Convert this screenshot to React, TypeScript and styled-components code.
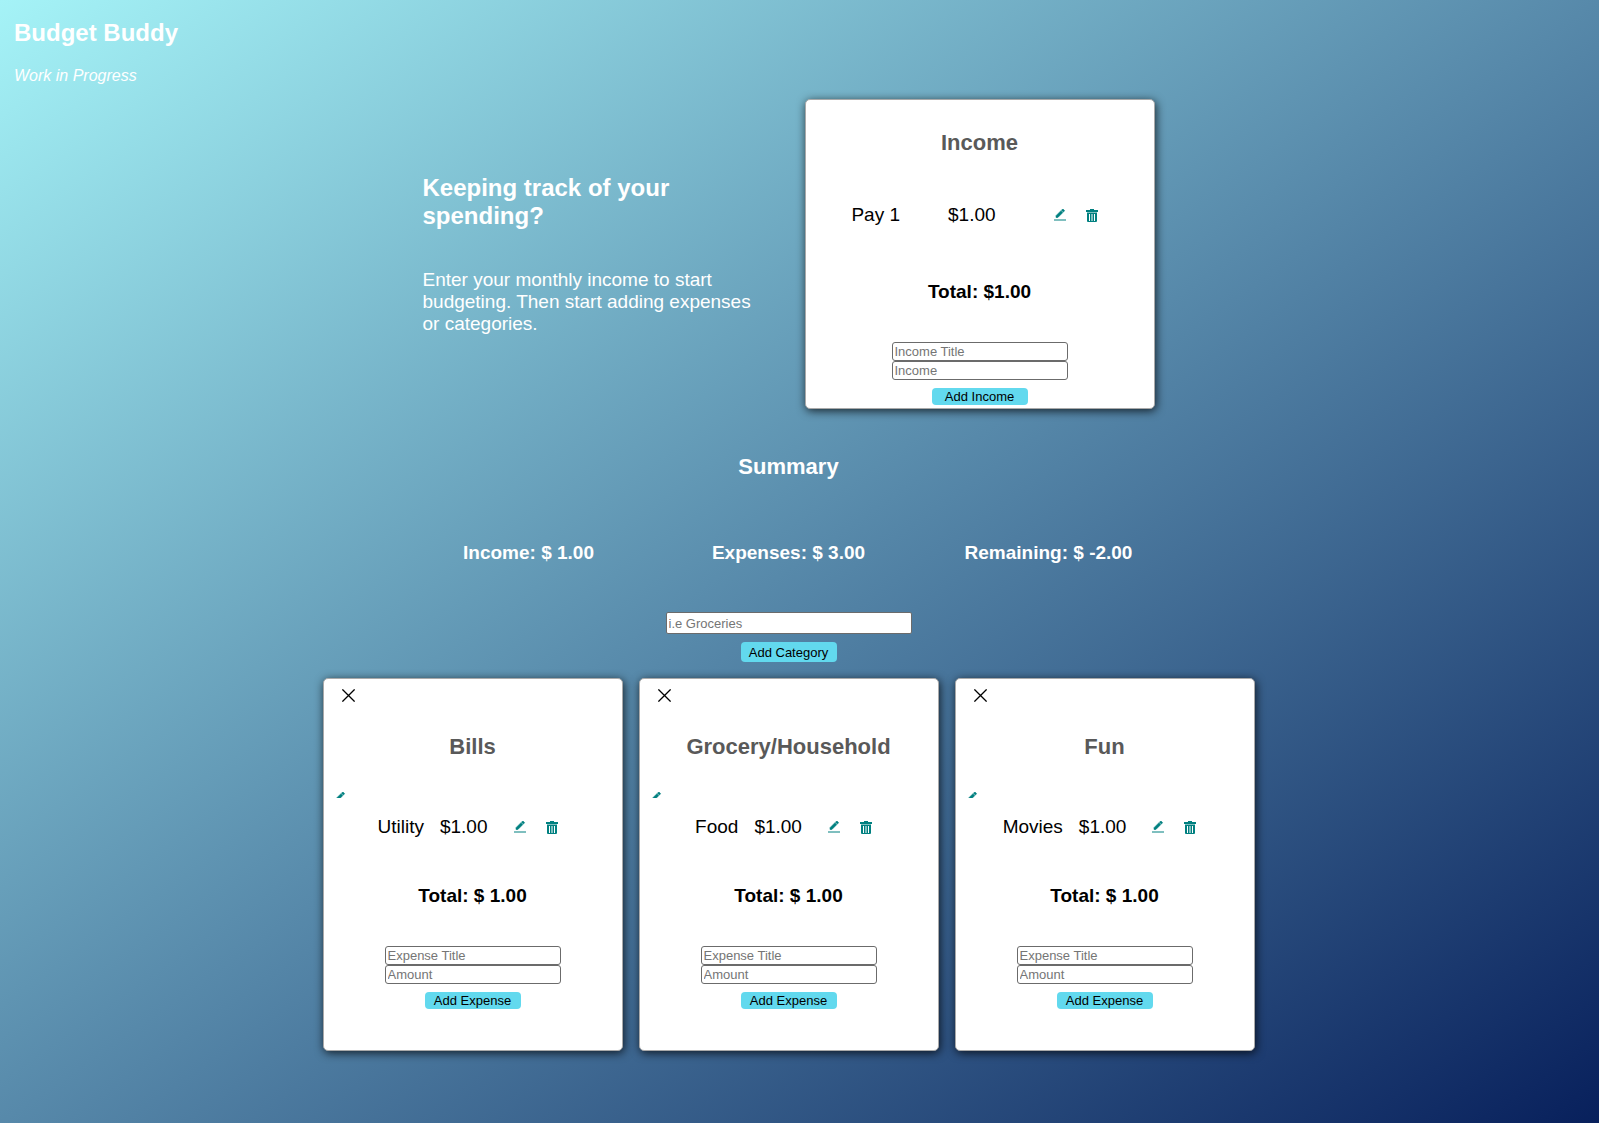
import React from "react";
import styled, { createGlobalStyle } from "styled-components";

const GlobalStyle = createGlobalStyle`
  * { box-sizing: border-box; }
  body {
    margin: 0;
    font-family: "Liberation Sans", Arial, sans-serif;
    font-size: 16px;
    color: #000;
  }
  h1, h2, h3, p, ul { margin: 0; padding: 0; }
`;

const Page = styled.div`
  min-height: 100vh;
  padding: 19px 22px 72px 0;
  background: linear-gradient(to bottom right, #a5f3f7 0%, #5789aa 50%, #08205c 100%);
`;

const Header = styled.header`
  padding-left: 14px;
  color: #fff;
`;

const Brand = styled.h1`
  font-size: 24px;
  line-height: 28px;
`;

const Status = styled.p`
  margin-top: 20px;
  font-style: italic;
  line-height: 18px;
`;

const Main = styled.main`
  display: flex;
  flex-direction: column;
  align-items: center;
  margin-top: 14px;
`;

const Hero = styled.section`
  display: flex;
  justify-content: center;
  align-items: center;
  gap: 48px;
`;

const Intro = styled.div`
  width: 334px;
  color: #fff;
`;

const IntroTitle = styled.h2`
  font-size: 24px;
  line-height: 28px;
`;

const IntroText = styled.p`
  margin-top: 39px;
  font-size: 19px;
  line-height: 22px;
`;

const Card = styled.article<{ $wide?: boolean }>`
  display: flex;
  flex-direction: column;
  align-items: center;
  width: ${(p) => (p.$wide ? "350px" : "300px")};
  padding: ${(p) => (p.$wide ? "30px 0 3px" : "10px 0 41px")};
  background: #fff;
  border: 1px solid #a9a9a9;
  border-radius: 5px;
  box-shadow: 1px 2px 10px rgba(0, 0, 0, 0.75);
`;

const CardTitle = styled.h2`
  color: #595959;
  font-size: 22px;
  line-height: 25px;
`;

const Entries = styled.ul<{ $top: number }>`
  margin-top: ${(p) => p.$top}px;
  list-style: none;
`;

const Entry = styled.li<{ $gap: number }>`
  display: flex;
  align-items: center;
  gap: ${(p) => p.$gap}px;
  height: 32px;
  font-size: 19px;
  line-height: 24px;
`;

const Actions = styled.div`
  display: flex;
`;

const IconButton = styled.button`
  display: flex;
  align-items: center;
  justify-content: center;
  width: 32px;
  height: 32px;
  padding: 0;
  border: 0;
  background: none;
  color: #008080;
  cursor: pointer;
`;

const CloseButton = styled(IconButton)`
  align-self: flex-start;
  width: 13px;
  height: 13px;
  margin: 0 0 32px 18px;
  color: #000;
`;

const RenameButton = styled(IconButton)`
  align-self: flex-start;
  align-items: flex-start;
  width: 12px;
  height: 6px;
  margin: 33px 0 0 10px;
  overflow: hidden;

  svg { flex: none; }
`;

const Total = styled.h3<{ $top: number }>`
  margin-top: ${(p) => p.$top}px;
  font-size: 19px;
  line-height: 22px;
`;

const Form = styled.form<{ $top: number }>`
  display: flex;
  flex-direction: column;
  align-items: center;
  margin-top: ${(p) => p.$top}px;
`;

const Field = styled.input<{ $large?: boolean }>`
  width: ${(p) => (p.$large ? "246px" : "176px")};
  height: ${(p) => (p.$large ? "22px" : "19px")};
  padding: 1px 2px;
  border: 1px solid #6b6b6b;
  border-radius: ${(p) => (p.$large ? "2px" : "3px")};
  background: #fff;
  font-family: inherit;
  font-size: 13px;

  &::placeholder { color: #757575; }
`;

const SubmitButton = styled.button<{ $large?: boolean }>`
  width: 96px;
  height: ${(p) => (p.$large ? "20px" : "17px")};
  margin-top: 8px;
  padding: 0;
  border: 0;
  border-radius: 4px;
  background: #62d9ee;
  color: #000;
  font-family: inherit;
  font-size: 13px;
  line-height: 17px;
  cursor: pointer;
`;

const Summary = styled.section`
  display: flex;
  flex-direction: column;
  align-items: center;
  margin-top: 45px;
  color: #fff;
`;

const SummaryTitle = styled.h2`
  font-size: 22px;
  line-height: 25px;
`;

const Figures = styled.div`
  display: grid;
  grid-template-columns: repeat(3, 260px);
  margin-top: 63px;
  text-align: center;
`;

const Figure = styled.h3`
  font-size: 19px;
  line-height: 22px;
`;

const Categories = styled.section`
  display: flex;
  flex-wrap: wrap;
  justify-content: center;
  gap: 16px;
  margin-top: 16px;
`;

const PencilIcon = () => (
  <svg width="12" height="12" viewBox="0 0 24 24" fill="currentColor" aria-hidden="true">
    <path
      stroke="currentColor"
      strokeWidth="1.2"
      d="M17.75 7L14 3.25l-10 10V17h3.75l10-10zm2.96-2.96c.39-.39.39-1.02 0-1.41L18.37.29c-.39-.39-1.02-.39-1.41 0L15 2.25 18.75 6l1.96-1.96z"
    />
    <path fillOpacity=".5" d="M0 20h24v4H0z" />
  </svg>
);

const TrashIcon = () => (
  <svg width="12" height="13" viewBox="0 0 12 13" fill="currentColor" aria-hidden="true">
    <path d="M4 0h4v1h4v2H0V1h4z" />
    <path
      fillRule="evenodd"
      d="M1 3.5h10V12a1 1 0 0 1-1 1H2a1 1 0 0 1-1-1zM3 5v7h1V5zm2.5 0v7h1V5zM8 5v7h1V5z"
    />
  </svg>
);

const CloseIcon = () => (
  <svg width="13" height="13" viewBox="0 0 13 13" stroke="currentColor" strokeWidth="1.3" aria-hidden="true">
    <path d="M0.4 0.4L12.6 12.6M12.6 0.4L0.4 12.6" />
  </svg>
);

const money = (value: number) => value.toFixed(2);

type Item = { name: string; amount: number };

const incomes: Item[] = [{ name: "Pay 1", amount: 1 }];

const categories: { title: string; items: Item[] }[] = [
  { title: "Bills", items: [{ name: "Utility", amount: 1 }] },
  { title: "Grocery/Household", items: [{ name: "Food", amount: 1 }] },
  { title: "Fun", items: [{ name: "Movies", amount: 1 }] },
];

const sum = (items: Item[]) => items.reduce((acc, item) => acc + item.amount, 0);

const EntryList = ({ items, gap, top }: { items: Item[]; gap: number; top: number }) => (
  <Entries $top={top}>
    {items.map((item) => (
      <Entry key={item.name} $gap={gap}>
        <span>{item.name}</span>
        <span>${money(item.amount)}</span>
        <Actions>
          <IconButton type="button" aria-label={`Edit ${item.name}`}>
            <PencilIcon />
          </IconButton>
          <IconButton type="button" aria-label={`Delete ${item.name}`}>
            <TrashIcon />
          </IconButton>
        </Actions>
      </Entry>
    ))}
  </Entries>
);

const stop = (e: React.FormEvent) => e.preventDefault();

export default function App() {
  const income = sum(incomes);
  const expenses = categories.reduce((acc, c) => acc + sum(c.items), 0);

  return (
    <Page>
      <GlobalStyle />
      <Header>
        <Brand>Budget Buddy</Brand>
        <Status>Work in Progress</Status>
      </Header>
      <Main>
        <Hero>
          <Intro>
            <IntroTitle>Keeping track of your spending?</IntroTitle>
            <IntroText>
              Enter your monthly income to start budgeting. Then start adding expenses or categories.
            </IntroText>
          </Intro>
          <Card $wide>
            <CardTitle>Income</CardTitle>
            <EntryList items={incomes} gap={48} top={44} />
            <Total $top={50}>Total: ${money(income)}</Total>
            <Form $top={39} onSubmit={stop}>
              <Field aria-label="Income Title" placeholder="Income Title" />
              <Field aria-label="Income" placeholder="Income" />
              <SubmitButton>Add Income</SubmitButton>
            </Form>
          </Card>
        </Hero>

        <Summary>
          <SummaryTitle>Summary</SummaryTitle>
          <Figures>
            <Figure>Income: $ {money(income)}</Figure>
            <Figure>Expenses: $ {money(expenses)}</Figure>
            <Figure>Remaining: $ {money(income - expenses)}</Figure>
          </Figures>
        </Summary>

        <Form $top={48} onSubmit={stop}>
          <Field $large aria-label="Category" placeholder="i.e Groceries" />
          <SubmitButton $large>Add Category</SubmitButton>
        </Form>

        <Categories>
          {categories.map((category) => (
            <Card key={category.title}>
              <CloseButton type="button" aria-label={`Remove ${category.title}`}>
                <CloseIcon />
              </CloseButton>
              <CardTitle>{category.title}</CardTitle>
              <RenameButton type="button" aria-label={`Rename ${category.title}`}>
                <PencilIcon />
              </RenameButton>
              <EntryList items={category.items} gap={16} top={13} />
              <Total $top={42}>Total: $ {money(sum(category.items))}</Total>
              <Form $top={39} onSubmit={stop}>
                <Field aria-label="Expense Title" placeholder="Expense Title" />
                <Field aria-label="Amount" placeholder="Amount" />
                <SubmitButton>Add Expense</SubmitButton>
              </Form>
            </Card>
          ))}
        </Categories>
      </Main>
    </Page>
  );
}
